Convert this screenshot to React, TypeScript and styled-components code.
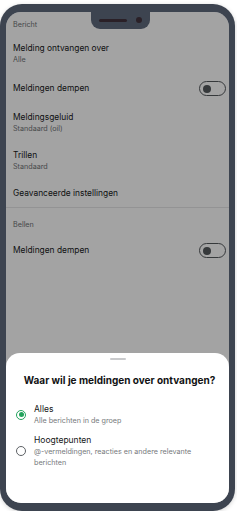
import React from "react";
import styled, { createGlobalStyle } from "styled-components";

const GlobalStyle = createGlobalStyle`
  html, body {
    margin: 0;
    padding: 0;
    background: #ffffff;
    font-family: Inter, "Noto Sans", "Liberation Sans", sans-serif;
  }
  * { box-sizing: border-box; }
`;

const Phone = styled.div`
  width: 235px;
  height: 507px;
  margin-top: 4px;
  background: #3d4450;
  border-radius: 22px;
  padding: 8px 6px 8px 6px;
  box-shadow: 0 1px 4px rgba(0, 0, 0, 0.18);
`;

const Screen = styled.div`
  position: relative;
  width: 100%;
  height: 100%;
  background: #ffffff;
  border-radius: 15px;
  overflow: hidden;
`;

const Notch = styled.div`
  position: absolute;
  top: 0;
  left: 85px;
  width: 59px;
  height: 17px;
  background: #3d4450;
  border-radius: 0 0 9px 9px;
  z-index: 5;
  display: flex;
  align-items: center;
  justify-content: center;
  gap: 9px;
  padding-bottom: 1px;
`;

const Speaker = styled.div`
  width: 28px;
  height: 3px;
  border-radius: 2px;
  background: #2a2027;
`;

const Camera = styled.div`
  width: 6px;
  height: 6px;
  border-radius: 50%;
  background: #2a2027;
`;

const SectionLabel = styled.div<{ top: number }>`
  padding: ${(p) => p.top}px 7px 0;
  margin-bottom: 5px;
  font-size: 7.2px;
  line-height: 10px;
  color: #6e7174;
`;

const Row = styled.div`
  display: flex;
  align-items: center;
  justify-content: space-between;
  padding: 8px 7px;
`;

const RowText = styled.div`
  display: flex;
  flex-direction: column;
`;

const RowTitle = styled.div`
  font-size: 8.4px;
  line-height: 11px;
  color: #17191b;
`;

const RowSub = styled.div`
  font-size: 7.2px;
  line-height: 11px;
  color: #707376;
`;

const Toggle = styled.div`
  width: 27px;
  height: 15px;
  border: 1px solid #55595d;
  border-radius: 8px;
  display: flex;
  align-items: center;
  padding-left: 3px;
  margin-right: -4px;
`;

const Knob = styled.div`
  width: 8px;
  height: 8px;
  border-radius: 50%;
  background: #55595d;
`;

const Divider = styled.div`
  height: 1px;
  background: #e6e7e8;
`;

const Overlay = styled.div`
  position: absolute;
  top: 0;
  left: 0;
  right: 0;
  bottom: 0;
  background: rgba(0, 0, 0, 0.36);
  z-index: 2;
`;

const Sheet = styled.div`
  position: absolute;
  left: 0;
  right: 0;
  bottom: 0;
  height: 150px;
  background: #ffffff;
  border-radius: 14px 14px 0 0;
  z-index: 3;
  padding: 5px 22px 0 10px;
  display: flex;
  flex-direction: column;
`;

const Handle = styled.div`
  width: 16px;
  height: 1.5px;
  background: #c9cacc;
  border-radius: 1px;
  align-self: center;
  margin-left: 12px;
`;

const SheetTitle = styled.div`
  margin-top: 13.5px;
  margin-right: -16px;
  font-size: 10px;
  line-height: 14px;
  font-weight: 700;
  color: #111213;
  text-align: center;
`;

const Options = styled.div`
  margin-top: 16.5px;
  display: flex;
  flex-direction: column;
  gap: 9px;
`;

const Option = styled.div`
  display: flex;
  align-items: center;
  gap: 8px;
`;

const Radio = styled.div<{ checked?: boolean }>`
  flex: none;
  width: 10px;
  height: 10px;
  border-radius: 50%;
  border: 1.2px solid ${(p) => (p.checked ? "#22a35c" : "#5d6165")};
  display: flex;
  align-items: center;
  justify-content: center;
  &::after {
    content: "";
    display: ${(p) => (p.checked ? "block" : "none")};
    width: 5px;
    height: 5px;
    border-radius: 50%;
    background: #22a35c;
  }
`;

const OptionTitle = styled.div`
  font-size: 8.5px;
  line-height: 11px;
  color: #151617;
`;

const OptionSub = styled.div`
  font-size: 7.2px;
  line-height: 11px;
  color: #76797c;
`;

type Item = { title: string; sub?: string; toggle?: boolean };

const bericht: Item[] = [
  { title: "Melding ontvangen over", sub: "Alle" },
  { title: "Meldingen dempen", toggle: true },
  { title: "Meldingsgeluid", sub: "Standaard (oil)" },
  { title: "Trillen", sub: "Standaard" },
  { title: "Geavanceerde instellingen" },
];

const SettingRow: React.FC<{ item: Item }> = ({ item }) => (
  <Row>
    <RowText>
      <RowTitle>{item.title}</RowTitle>
      {item.sub && <RowSub>{item.sub}</RowSub>}
    </RowText>
    {item.toggle && (
      <Toggle>
        <Knob />
      </Toggle>
    )}
  </Row>
);

export default function App() {
  return (
    <>
      <GlobalStyle />
      <Phone>
        <Screen>
          <Notch>
            <Speaker />
            <Camera />
          </Notch>
          <SectionLabel top={8}>Bericht</SectionLabel>
          {bericht.map((it) => (
            <SettingRow key={it.title} item={it} />
          ))}
          <Divider />
          <SectionLabel top={12}>Bellen</SectionLabel>
          <SettingRow item={{ title: "Meldingen dempen", toggle: true }} />
          <Overlay />
          <Sheet>
            <Handle />
            <SheetTitle>Waar wil je meldingen over ontvangen?</SheetTitle>
            <Options>
              <Option>
                <Radio checked />
                <RowText>
                  <OptionTitle>Alles</OptionTitle>
                  <OptionSub>Alle berichten in de groep</OptionSub>
                </RowText>
              </Option>
              <Option>
                <Radio />
                <RowText>
                  <OptionTitle>Hoogtepunten</OptionTitle>
                  <OptionSub>
                    @-vermeldingen, reacties en andere relevante berichten
                  </OptionSub>
                </RowText>
              </Option>
            </Options>
          </Sheet>
        </Screen>
      </Phone>
    </>
  );
}
